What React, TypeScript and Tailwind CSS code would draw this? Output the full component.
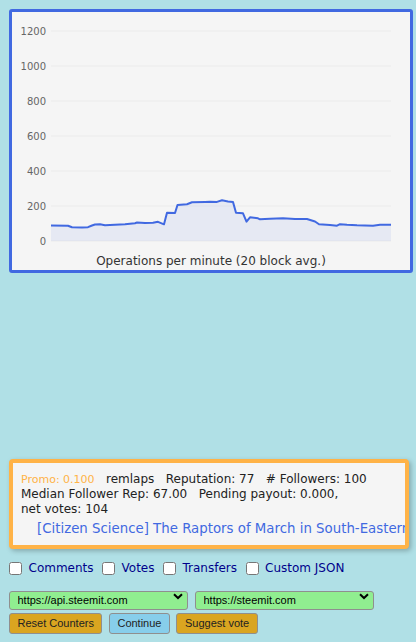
const GRID = [
  { y: 31, label: "1200" },
  { y: 66, label: "1000" },
  { y: 101, label: "800" },
  { y: 136, label: "600" },
  { y: 171, label: "400" },
  { y: 206, label: "200" },
  { y: 241, label: "0" },
];

// operations per minute, already in plot coordinates
const OPS: [number, number][] = [
  [51, 225.5], [68, 225.7], [72, 227.3], [82, 227.5], [88, 227.2], [92, 225.5],
  [95, 224.5], [100, 224.3], [105, 225.2], [115, 224.8], [125, 224.2], [135, 223.2],
  [137, 222.5], [145, 223], [153, 222.8], [158, 221.8], [164, 224.3], [167, 212.7],
  [175, 213], [177.5, 205], [187, 204.3], [192, 202.3], [205, 202], [210, 201.8],
  [217, 201.9], [222, 200.3], [228, 201.5], [233, 202], [236, 212.7], [243, 213.3],
  [246.5, 221.7], [250, 217.3], [258, 218.3], [260, 219.3], [270, 218.8], [283, 218.3],
  [295, 219], [307, 219], [315, 221.5], [319, 224.3], [330, 225], [337, 225.7],
  [340, 224.2], [347, 224.8], [357, 225.3], [373, 225.7], [380, 224.8], [391, 224.8],
];

function OpsChart() {
  const line = OPS.map(([x, y], i) => `${i ? "L" : "M"}${x},${y}`).join(" ");
  const area = `M51,241 ${OPS.map(([x, y]) => `L${x},${y}`).join(" ")} L391,241 Z`;
  return (
    <svg width="398" height="241" viewBox="12 12 398 241" className="block">
      {GRID.map((g) => (
        <g key={g.label}>
          <line x1="51" x2="391" y1={g.y} y2={g.y} stroke="#ebebeb" strokeWidth="1" />
          <text
            x="46"
            y={g.y}
            textAnchor="end"
            dominantBaseline="central"
            fontSize="10"
            fill="#666"
            fontFamily="DejaVu Sans, sans-serif"
          >
            {g.label}
          </text>
        </g>
      ))}
      <path d={area} fill="rgba(65,105,225,0.08)" />
      <path d={line} fill="none" stroke="#4169e1" strokeWidth="2" strokeLinejoin="round" />
    </svg>
  );
}

function Check({ label }: { label: string }) {
  return (
    <label className="flex items-center">
      <input type="checkbox" className="m-0 w-[13px] h-[13px]" />
      <span className="ml-[6.5px] text-[12px] text-[#00008b]">{label}</span>
    </label>
  );
}

function NodeSelect({ value }: { value: string }) {
  return (
    <div className="relative w-[179px] h-[18.5px]">
      <select
        defaultValue={value}
        className="appearance-none w-full h-full bg-[#90ee90] border border-[#8f8f8f] rounded-[3px] pl-[7.5px] text-[11px] text-black font-['Liberation_Sans',Arial,sans-serif] outline-none"
      >
        <option>{value}</option>
      </select>
      <svg
        width="10"
        height="7"
        viewBox="0 0 10 7"
        className="absolute right-[5px] top-[6px] pointer-events-none"
      >
        <path d="M1 1.2 L5 5 L9 1.2" fill="none" stroke="#000" strokeWidth="2" />
      </svg>
    </div>
  );
}

function Btn({ label, tone }: { label: string; tone: string }) {
  return (
    <button
      className={`h-[21px] px-[7.5px] border border-[#8f8f8f] rounded-[3px] text-[11px] text-[#222] font-['Liberation_Sans',Arial,sans-serif] ${tone}`}
    >
      {label}
    </button>
  );
}

export default function App() {
  const sp = "\u00a0\u00a0\u00a0";
  return (
    <div className="min-h-[642px] bg-[#b0e0e6] pt-[9px] pl-[9px] font-['DejaVu_Sans',sans-serif]">
      <div className="w-[404px] h-[264px] border-[3px] border-[#4169e1] rounded-[3px] bg-[#f5f5f5]">
        <OpsChart />
        <div className="h-[17px] leading-[17px] text-center text-[12px] text-[#333]">
          Operations per minute (20 block avg.)
        </div>
      </div>

      <div className="mt-[186px] w-[400px] h-[90px] border-4 border-[#ffb347] rounded-[4px] bg-[#f5f5f5] overflow-hidden shadow-[2px_2px_5px_rgba(0,0,0,0.25)] pt-[9px] pl-[8px]">
        <div className="text-[12px] leading-[15px] text-[#222] whitespace-nowrap">
          <div>
            <span className="text-[11px] text-[#ffb347]">Promo: 0.100</span>
            {sp}remlaps{sp}Reputation: 77{sp}# Followers: 100
          </div>
          <div>Median Follower Rep: 67.00{sp}Pending payout: 0.000,</div>
          <div>net votes: 104</div>
        </div>
        <div className="mt-[4px] ml-[16px] text-[13.33px] leading-[16px] text-[#4169e1] whitespace-nowrap">
          [Citizen Science] The Raptors of March in South-Eastern
        </div>
      </div>

      <div className="mt-[11px] h-[16px] flex items-center gap-[8.5px]">
        <Check label="Comments" />
        <Check label="Votes" />
        <Check label="Transfers" />
        <Check label="Custom JSON" />
      </div>

      <div className="mt-[11px] flex gap-[7px]">
        <NodeSelect value="https://api.steemit.com" />
        <NodeSelect value="https://steemit.com" />
      </div>

      <div className="mt-[7px] flex gap-[6.5px]">
        <Btn label="Reset Counters" tone="bg-[#daa520]" />
        <Btn label="Continue" tone="bg-[#87ceeb]" />
        <Btn label="Suggest vote" tone="bg-[#daa520]" />
      </div>
    </div>
  );
}
